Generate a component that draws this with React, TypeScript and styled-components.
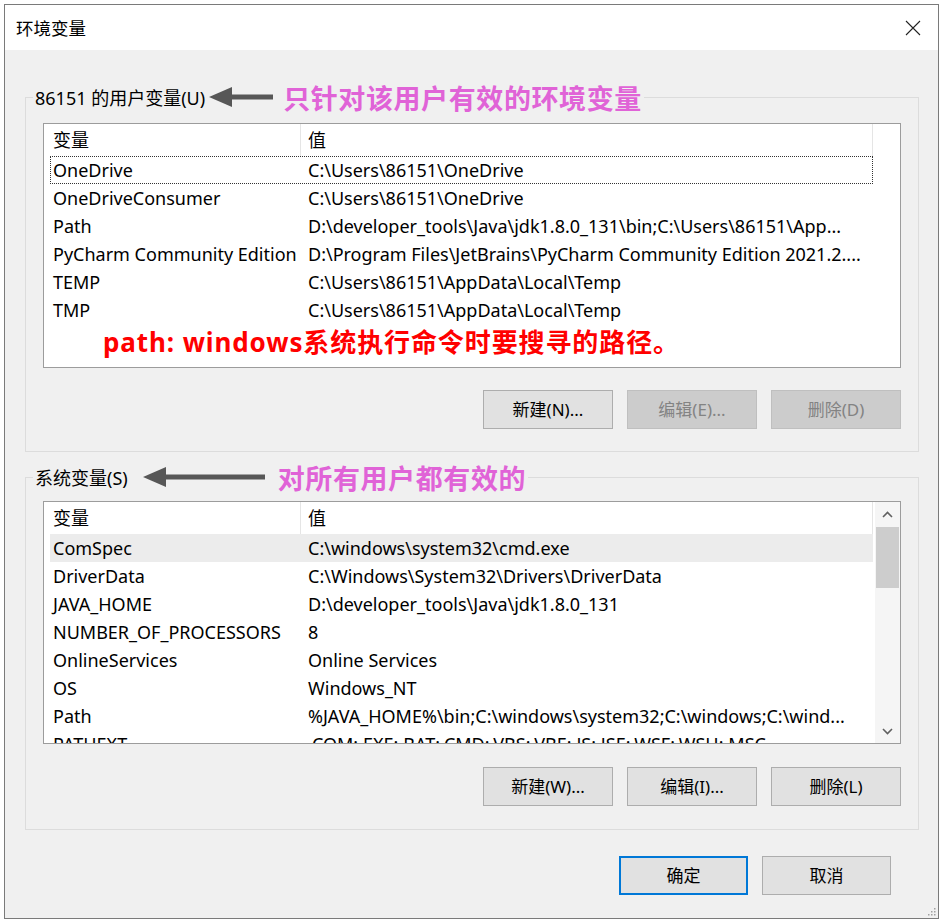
import React from 'react';
import styled, { createGlobalStyle } from 'styled-components';

type VarRow = {
  name: string;
  value: string;
};

const USER_VARS: VarRow[] = [
  { name: 'OneDrive', value: 'C:\\Users\\86151\\OneDrive' },
  { name: 'OneDriveConsumer', value: 'C:\\Users\\86151\\OneDrive' },
  { name: 'Path', value: 'D:\\developer_tools\\Java\\jdk1.8.0_131\\bin;C:\\Users\\86151\\App...' },
  {
    name: 'PyCharm Community Edition',
    value: 'D:\\Program Files\\JetBrains\\PyCharm Community Edition 2021.2....',
  },
  { name: 'TEMP', value: 'C:\\Users\\86151\\AppData\\Local\\Temp' },
  { name: 'TMP', value: 'C:\\Users\\86151\\AppData\\Local\\Temp' },
];

const SYSTEM_VARS: VarRow[] = [
  { name: 'ComSpec', value: 'C:\\windows\\system32\\cmd.exe' },
  { name: 'DriverData', value: 'C:\\Windows\\System32\\Drivers\\DriverData' },
  { name: 'JAVA_HOME', value: 'D:\\developer_tools\\Java\\jdk1.8.0_131' },
  { name: 'NUMBER_OF_PROCESSORS', value: '8' },
  { name: 'OnlineServices', value: 'Online Services' },
  { name: 'OS', value: 'Windows_NT' },
  { name: 'Path', value: '%JAVA_HOME%\\bin;C:\\windows\\system32;C:\\windows;C:\\wind...' },
  { name: 'PATHEXT', value: '.COM;.EXE;.BAT;.CMD;.VBS;.VBE;.JS;.JSE;.WSF;.WSH;.MSC' },
];

const FONT = `'Noto Sans', 'Noto Sans CJK SC', sans-serif`;

const GlobalStyle = createGlobalStyle`
  html, body {
    margin: 0;
    padding: 0;
    background: #ffffff;
  }
  body {
    font-family: ${FONT};
    color: #000;
  }
  * {
    box-sizing: border-box;
  }
`;

const ArrowLeft = ({ width }: { width: number }) => (
  <svg width={width} height={22} viewBox={`0 0 ${width} 22`}>
    <polygon points="0,11 23,1 23,21" fill="#575757" />
    <rect x={22} y={8.5} width={width - 22} height={5} fill="#575757" />
  </svg>
);

const Chevron = ({ up }: { up?: boolean }) => (
  <svg width={11} height={7} viewBox="0 0 11 7">
    <path
      d={up ? 'M1 6 L5.5 1.5 L10 6' : 'M1 1 L5.5 5.5 L10 1'}
      fill="none"
      stroke="#606060"
      strokeWidth={1.6}
    />
  </svg>
);

const VarList = ({
  rows,
  height,
  focusIndex,
  selectedIndex,
  scroll,
  note,
}: {
  rows: VarRow[];
  height: number;
  focusIndex?: number;
  selectedIndex?: number;
  scroll?: boolean;
  note?: string;
}) => (
  <List $height={height}>
    <ListContent>
      <Header>
        <HeadCell>变量</HeadCell>
        <HeadCell $second>值</HeadCell>
      </Header>
      <Rows>
        {rows.map((row, index) => (
          <Row
            key={row.name + index}
            $focused={index === focusIndex}
            $selected={index === selectedIndex}
          >
            <NameCell>{row.name}</NameCell>
            <ValueCell>{row.value}</ValueCell>
          </Row>
        ))}
        {note && <Note>{note}</Note>}
      </Rows>
    </ListContent>
    {scroll ? (
      <ScrollBar>
        <ScrollButton>
          <Chevron up />
        </ScrollButton>
        <Thumb />
        <ScrollSpace />
        <ScrollButton>
          <Chevron />
        </ScrollButton>
      </ScrollBar>
    ) : (
      <div />
    )}
  </List>
);

const App = () => {
  return (
    <>
      <GlobalStyle />
      <Window>
        <TitleBar>
          <Title>环境变量</Title>
          <svg width={16} height={16} viewBox="0 0 16 16">
            <path d="M1 1 L15 15 M15 1 L1 15" stroke="#222" strokeWidth={1.1} />
          </svg>
        </TitleBar>
        <Body>
          <Group $top={9} $bottom={22}>
            <Legend>
              <LegendLabel>86151 的用户变量(U)</LegendLabel>
              <ArrowBox $gap={4}>
                <ArrowLeft width={64} />
              </ArrowBox>
              <PinkNote $gap={10}>只针对该用户有效的环境变量</PinkNote>
            </Legend>
            <VarList
              rows={USER_VARS}
              height={245}
              focusIndex={0}
              note="path: windows系统执行命令时要搜寻的路径。"
            />
            <ButtonRow>
              <Button>新建(N)...</Button>
              <Button disabled>编辑(E)...</Button>
              <Button disabled>删除(D)</Button>
            </ButtonRow>
          </Group>
          <Group $top={7} $bottom={23} $spaced>
            <Legend>
              <LegendLabel>系统变量(S)</LegendLabel>
              <ArrowBox $gap={15}>
                <ArrowLeft width={122} />
              </ArrowBox>
              <PinkNote $gap={13}>对所有用户都有效的</PinkNote>
            </Legend>
            <VarList rows={SYSTEM_VARS} height={243} selectedIndex={0} scroll />
            <ButtonRow $top={23}>
              <Button>新建(W)...</Button>
              <Button>编辑(I)...</Button>
              <Button>删除(L)</Button>
            </ButtonRow>
          </Group>
          <Footer>
            <Button $primary $width={129}>
              确定
            </Button>
            <Button $width={129}>取消</Button>
          </Footer>
        </Body>
        <Grip>
          <svg width={10} height={10} viewBox="0 0 10 10">
            {[
              [8, 2],
              [5, 5],
              [8, 5],
              [2, 8],
              [5, 8],
              [8, 8],
            ].map(([x, y]) => (
              <rect key={`${x}-${y}`} x={x} y={y} width={1.5} height={1.5} fill="#a0a0a0" />
            ))}
          </svg>
        </Grip>
      </Window>
    </>
  );
};

export default App;

const Window = styled.div`
  position: relative;
  margin: 4px 0 0 4px;
  width: 935px;
  height: 915px;
  border: 1px solid #7a7a7a;
  display: flex;
  flex-direction: column;
  background: #f0f0f0;
  font-family: ${FONT};
`;

const TitleBar = styled.div`
  height: 45px;
  flex: none;
  display: flex;
  align-items: center;
  justify-content: space-between;
  padding: 0 17px 0 11px;
  background: #ffffff;
`;

const Title = styled.div`
  font-size: 17.5px;
  color: #000;
`;

const Body = styled.div`
  flex: 1;
  display: flex;
  flex-direction: column;
  padding: 30px 19px 0 20px;
`;

const Group = styled.fieldset<{ $top: number; $bottom: number; $spaced?: boolean }>`
  margin: ${p => (p.$spaced ? '8px' : '0')} 0 0 0;
  padding: ${p => p.$top}px 17px ${p => p.$bottom}px 17px;
  border: 1px solid #dcdcdc;
  min-width: 0;
`;

const Legend = styled.legend`
  margin-left: -10px;
  padding: 0 2px;
  height: 34px;
  display: flex;
  align-items: center;
`;

const LegendLabel = styled.span`
  font-size: 18px;
  color: #000;
  white-space: nowrap;
`;

const ArrowBox = styled.span<{ $gap: number }>`
  display: flex;
  margin-left: ${p => p.$gap}px;
`;

const PinkNote = styled.span<{ $gap: number }>`
  margin-left: ${p => p.$gap}px;
  font-size: 27px;
  font-weight: 700;
  letter-spacing: 0.6px;
  color: #e063d7;
  white-space: nowrap;
`;

const List = styled.div<{ $height: number }>`
  height: ${p => p.$height}px;
  border: 1px solid #9c9c9c;
  background: #ffffff;
  display: grid;
  grid-template-columns: 829px 1fr;
  overflow: hidden;
`;

const ListContent = styled.div`
  display: flex;
  flex-direction: column;
  min-width: 0;
  overflow: hidden;
`;

const Header = styled.div`
  display: grid;
  grid-template-columns: 256px 1fr;
  height: 32px;
  flex: none;
`;

const HeadCell = styled.div<{ $second?: boolean }>`
  font-size: 18px;
  line-height: 32px;
  padding-left: ${p => (p.$second ? '7px' : '9px')};
  border-left: ${p => (p.$second ? '1px solid #e5e5e5' : 'none')};
  border-right: ${p => (p.$second ? '1px solid #e5e5e5' : 'none')};
  color: #000;
`;

const Rows = styled.div`
  display: flex;
  flex-direction: column;
  padding-left: 6px;
`;

const Row = styled.div<{ $focused?: boolean; $selected?: boolean }>`
  display: grid;
  grid-template-columns: 250px 1fr;
  height: 28px;
  flex: none;
  align-items: center;
  font-size: 18px;
  color: #000;
  background: ${p => (p.$selected ? '#ececec' : 'transparent')};
  outline: ${p => (p.$focused ? '1px dotted #333' : 'none')};
  outline-offset: -1px;
`;

const NameCell = styled.div`
  padding-left: 3px;
  white-space: nowrap;
  overflow: hidden;
`;

const ValueCell = styled.div`
  padding-left: 8px;
  white-space: nowrap;
  overflow: hidden;
  text-overflow: ellipsis;
`;

const Note = styled.div`
  height: 36px;
  line-height: 36px;
  padding-left: 53px;
  font-size: 26px;
  font-weight: 700;
  letter-spacing: 0.9px;
  color: #ff0000;
  white-space: nowrap;
`;

const ScrollBar = styled.div`
  margin-left: 2px;
  display: flex;
  flex-direction: column;
  background: #f5f5f5;
`;

const ScrollButton = styled.div`
  height: 24px;
  flex: none;
  display: flex;
  align-items: center;
  justify-content: center;
`;

const Thumb = styled.div`
  height: 61px;
  margin: 1px 1px 0 1px;
  background: #cdcdcd;
`;

const ScrollSpace = styled.div`
  flex: 1;
`;

const ButtonRow = styled.div<{ $top?: number }>`
  display: flex;
  justify-content: flex-end;
  gap: 14px;
  margin-top: ${p => p.$top ?? 22}px;
`;

const Button = styled.button<{ $primary?: boolean; $width?: number }>`
  width: ${p => p.$width ?? 130}px;
  height: 39px;
  padding: 0 0 3px 0;
  font-family: ${FONT};
  font-size: 17px;
  color: #000;
  background: #e1e1e1;
  border: ${p => (p.$primary ? '2px solid #0078d7' : '1px solid #adadad')};

  &:disabled {
    background: #cccccc;
    border-color: #bfbfbf;
    color: #838383;
  }
`;

const Footer = styled.div`
  display: flex;
  justify-content: flex-end;
  gap: 14px;
  margin-top: 26px;
  padding-right: 28px;
`;

const Grip = styled.div`
  position: absolute;
  right: 2px;
  bottom: 2px;
  display: flex;
`;
